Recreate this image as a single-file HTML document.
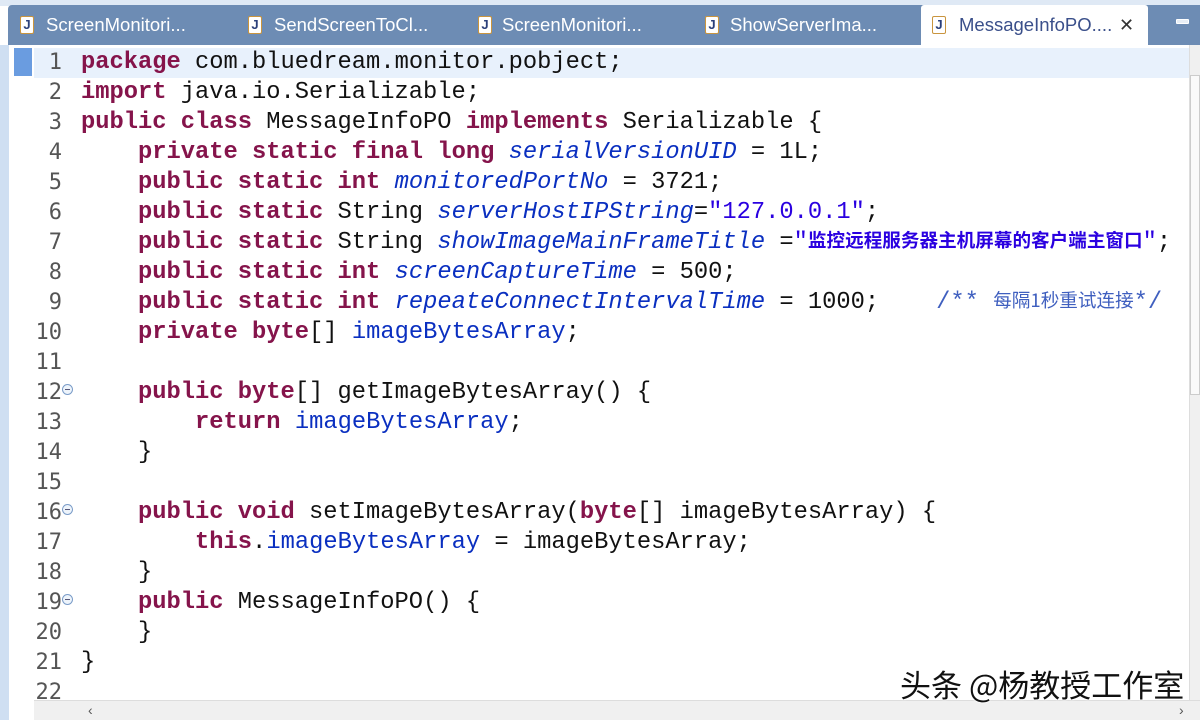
<!DOCTYPE html>
<html><head><meta charset="utf-8"><style>
*{margin:0;padding:0;box-sizing:border-box}
body{width:1200px;height:720px;overflow:hidden;background:#fff;position:relative;font-family:"Liberation Mono",monospace}
.top{position:absolute;left:0;top:0;width:1200px;height:6px;background:#dfe9f5}
.strip{position:absolute;left:8px;top:5px;width:1192px;height:40px;background:#6d8cb4;border-radius:4px 0 0 0}
.tab{position:absolute;top:5px;height:40px;font:18.5px "Liberation Sans",sans-serif;color:#fff;line-height:40px;white-space:nowrap}
.ic{position:absolute;top:11px;width:14px;height:18px;background:#fff;border:1px solid #c9953f;border-radius:2px;font:bold 13px/16px "Liberation Sans",sans-serif;color:#2a3f7a;text-align:center}
.active{left:921px;width:227px;background:#fff;border-radius:3px 3px 0 0}
.leftbar{position:absolute;left:0;top:45px;width:9px;height:675px;background:#cfdff2}
.cur{position:absolute;left:34px;top:48px;width:1156px;height:30px;background:#e8f1fc}
.mark{position:absolute;left:14px;top:48px;width:18px;height:28px;background:#6a9ce0}
.ln{position:absolute;left:20px;width:42px;text-align:right;font-size:22px;color:#555;line-height:30px;font-family:"DejaVu Sans Mono",monospace}
.cl{position:absolute;left:81px;height:30px;font-size:23.75px;line-height:30px;color:#111;white-space:pre}
.k{color:#85144b;font-weight:bold}
.f{color:#0a2fc0}
.fi{color:#0a2fc0;font-style:italic}
.s{color:#2a00e0}
.c{color:#3f5fbf}
.cj{font-family:"Noto Sans CJK SC",sans-serif;font-size:18.6px;font-weight:bold;line-height:0;vertical-align:1px}
.fold{position:absolute;left:62px;width:11px;height:11px;border:1px solid #7a9cc8;border-radius:50%;background:#eef4fb}
.fold:after{content:"";position:absolute;left:2px;top:4px;width:5px;height:1px;background:#557}
.vs{position:absolute;left:1189px;top:45px;width:11px;height:655px;background:#f0f0f0;border-left:1px solid #ddd}
.thumb{position:absolute;left:1190px;top:75px;width:10px;height:320px;background:#fafafa;border:1px solid #ccc}
.hs{position:absolute;left:34px;top:700px;width:1166px;height:20px;background:#f0f0f0;border-top:1px solid #ddd;font:14px "Liberation Sans",sans-serif;color:#555}
.wm{position:absolute;left:900px;top:664px;font:31px "Noto Sans CJK SC",sans-serif;color:#111;text-shadow:0 0 2px #fff,0 0 2px #fff;line-height:40px}
</style></head><body>
<div class="top"></div>
<div class="strip"></div>
<div class="tab" style="left:20px"><span class="ic" style="left:0">J</span><span style="position:absolute;left:26px">ScreenMonitori...</span></div>
<div class="tab" style="left:248px"><span class="ic" style="left:0">J</span><span style="position:absolute;left:26px">SendScreenToCl...</span></div>
<div class="tab" style="left:478px"><span class="ic" style="left:0">J</span><span style="position:absolute;left:24px">ScreenMonitori...</span></div>
<div class="tab" style="left:705px"><span class="ic" style="left:0">J</span><span style="position:absolute;left:25px">ShowServerIma...</span></div>
<div class="tab active" style="color:#3a4f8a"><span class="ic" style="left:11px">J</span><span style="position:absolute;left:38px">MessageInfoPO....</span><span style="position:absolute;left:198px;font-size:18px;color:#333">✕</span></div>
<div style="position:absolute;left:1176px;top:19px;width:13px;height:5px;border:1px solid #fff;border-radius:1px;background:#e8eef6"></div>
<div class="leftbar"></div>
<div class="cur"></div>
<div class="mark"></div>
<div class="vs"></div><div class="thumb"></div>
<div class="hs"><span style="position:absolute;left:54px;top:1px">‹</span><span style="position:absolute;left:1145px;top:1px">›</span></div>

<div class="ln" style="top:48px">1</div><div class="cl" style="top:48px"><span class="k">package</span> com.bluedream.monitor.pobject;</div>
<div class="ln" style="top:78px">2</div><div class="cl" style="top:78px"><span class="k">import</span> java.io.Serializable;</div>
<div class="ln" style="top:108px">3</div><div class="cl" style="top:108px"><span class="k">public class</span> MessageInfoPO <span class="k">implements</span> Serializable {</div>
<div class="ln" style="top:138px">4</div><div class="cl" style="top:138px">    <span class="k">private static final long</span> <span class="fi">serialVersionUID</span> = 1L;</div>
<div class="ln" style="top:168px">5</div><div class="cl" style="top:168px">    <span class="k">public static int</span> <span class="fi">monitoredPortNo</span> = 3721;</div>
<div class="ln" style="top:198px">6</div><div class="cl" style="top:198px">    <span class="k">public static</span> String <span class="fi">serverHostIPString</span>=<span class="s">"127.0.0.1"</span>;</div>
<div class="ln" style="top:228px">7</div><div class="cl" style="top:228px">    <span class="k">public static</span> String <span class="fi">showImageMainFrameTitle</span> =<span class="s">"<span class="cj">监控远程服务器主机屏幕的客户端主窗口</span>"</span>;</div>
<div class="ln" style="top:258px">8</div><div class="cl" style="top:258px">    <span class="k">public static int</span> <span class="fi">screenCaptureTime</span> = 500;</div>
<div class="ln" style="top:288px">9</div><div class="cl" style="top:288px">    <span class="k">public static int</span> <span class="fi">repeateConnectIntervalTime</span> = 1000;    <span class="c">/** <span class="cj" style="font-weight:normal">每隔1秒重试连接</span>*/</span></div>
<div class="ln" style="top:318px">10</div><div class="cl" style="top:318px">    <span class="k">private byte</span>[] <span class="f">imageBytesArray</span>;</div>
<div class="ln" style="top:348px">11</div>
<div class="ln" style="top:378px">12</div><div class="fold" style="top:384px"></div><div class="cl" style="top:378px">    <span class="k">public byte</span>[] getImageBytesArray() {</div>
<div class="ln" style="top:408px">13</div><div class="cl" style="top:408px">        <span class="k">return</span> <span class="f">imageBytesArray</span>;</div>
<div class="ln" style="top:438px">14</div><div class="cl" style="top:438px">    }</div>
<div class="ln" style="top:468px">15</div>
<div class="ln" style="top:498px">16</div><div class="fold" style="top:504px"></div><div class="cl" style="top:498px">    <span class="k">public void</span> setImageBytesArray(<span class="k">byte</span>[] imageBytesArray) {</div>
<div class="ln" style="top:528px">17</div><div class="cl" style="top:528px">        <span class="k">this</span>.<span class="f">imageBytesArray</span> = imageBytesArray;</div>
<div class="ln" style="top:558px">18</div><div class="cl" style="top:558px">    }</div>
<div class="ln" style="top:588px">19</div><div class="fold" style="top:594px"></div><div class="cl" style="top:588px">    <span class="k">public</span> MessageInfoPO() {</div>
<div class="ln" style="top:618px">20</div><div class="cl" style="top:618px">    }</div>
<div class="ln" style="top:648px">21</div><div class="cl" style="top:648px">}</div>
<div class="ln" style="top:678px;height:22px;overflow:hidden">22</div>
<div class="wm">头条 @杨教授工作室</div>
</body></html>
